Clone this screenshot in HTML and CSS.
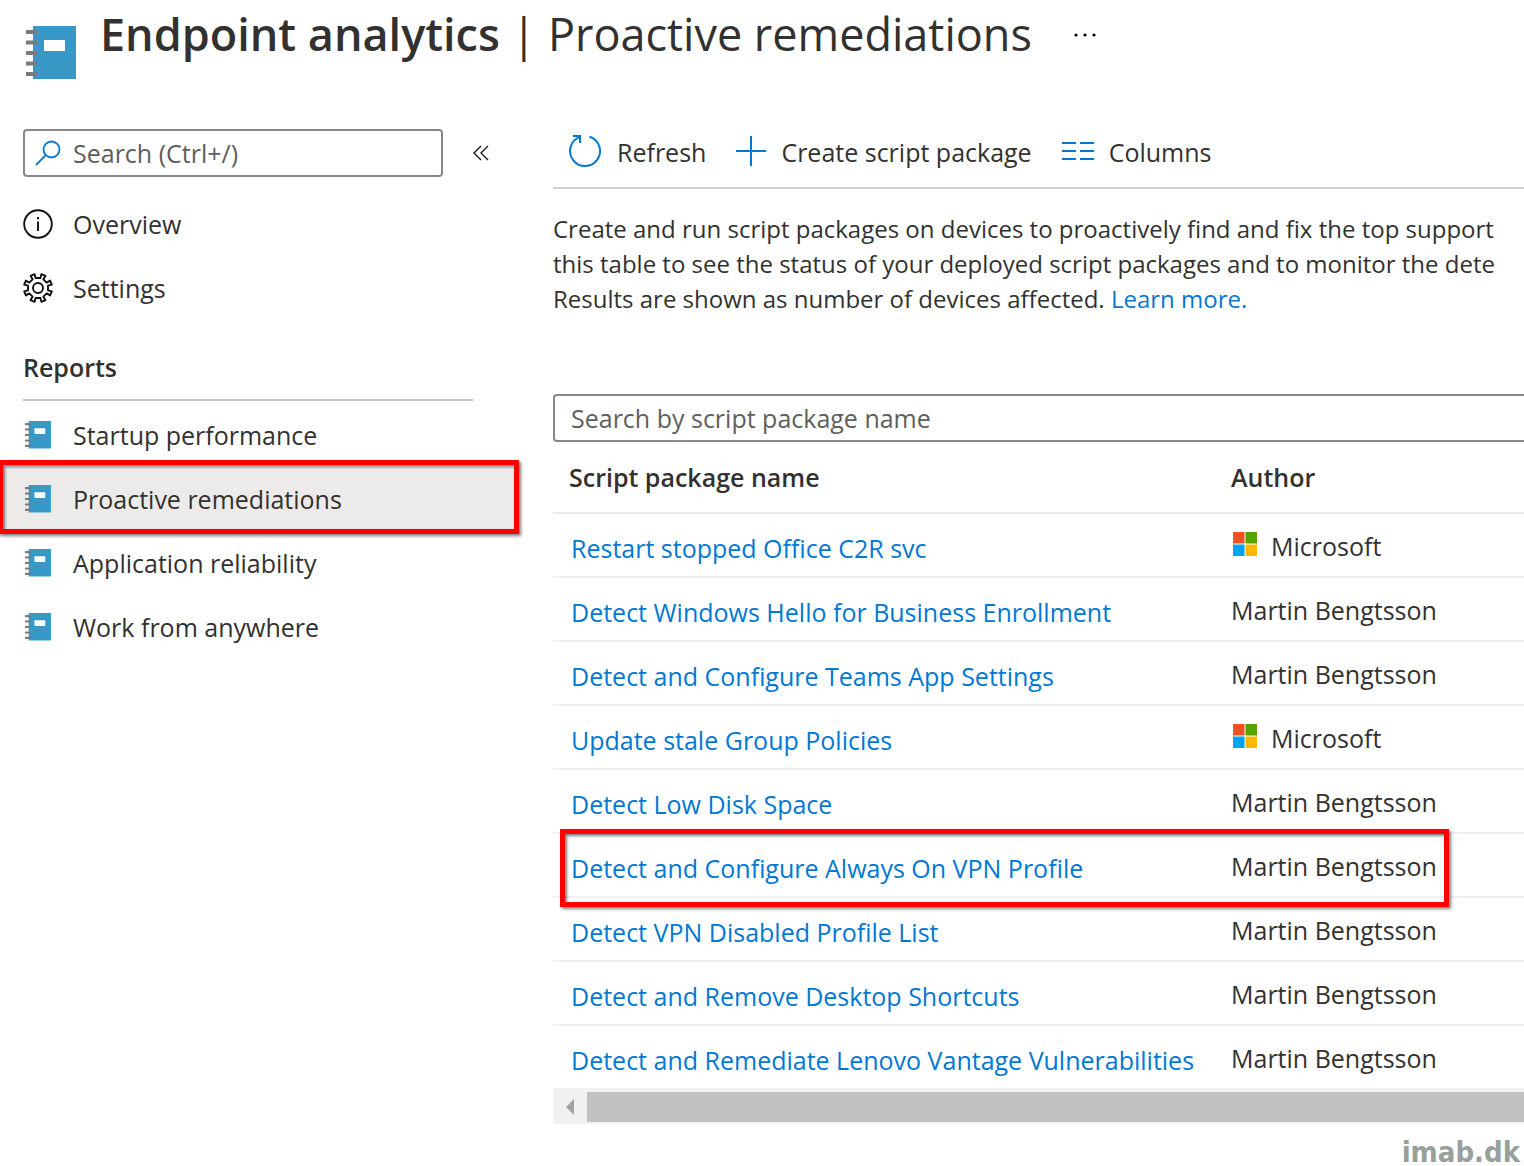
FILE: index.html
```
<!DOCTYPE html>
<html lang="en">
<head>
  <meta charset="UTF-8" />
  <meta name="viewport" content="width=device-width, initial-scale=1.0" />
  <title>Endpoint analytics | Proactive remediations</title>
  <link rel="stylesheet" href="styles.css">
</head>
<body>
  <svg class="sprite" aria-hidden="true">
    <symbol id="notebook" viewBox="0 0 50 54">
      <path fill="#3999c6" d="M7 0h43v53H7z"/>
      <path fill="#fff" d="M18 14h21v11H18z"/>
      <path fill="#7a7a7a" d="M0 4h11v4H0zM0 14.500h11v4H0zM0 25h11v4H0zM0 35.500h11v4H0zM0 46h11v4H0z"/>
    </symbol>
    <symbol id="windows" viewBox="0 0 24 24">
      <path fill="#f25022" d="M0 0h11.500v11.500H0z"/>
      <path fill="#57a300" d="M12.500 0H24v11.500H12.500z"/>
      <path fill="#00a4ef" d="M0 12.500h11.500V24H0z"/>
      <path fill="#ffb900" d="M12.500 12.500H24V24H12.500z"/>
    </symbol>
  </svg>

  <header class="page-header">
    <svg class="header-icon"><use href="#notebook"/></svg>
    <h1><strong>Endpoint analytics</strong> | Proactive remediations</h1>
    <button class="more" aria-label="More">
      <svg width="24" height="4" viewBox="0 0 24 4"><circle cx="3" cy="2" r="1.600"/><circle cx="12" cy="2" r="1.600"/><circle cx="21" cy="2" r="1.600"/></svg>
    </button>
  </header>

  <div class="layout">
    <nav class="sidebar">
      <div class="search-row">
        <label class="menu-search">
          <svg width="26" height="26" viewBox="0 0 26 26" fill="none" stroke="#0078d4" stroke-width="1.800"><circle cx="16.500" cy="9.500" r="8"/><path d="M10.800 15.200L1 25"/></svg>
          <input type="text" placeholder="Search (Ctrl+/)" aria-label="Search menu">
        </label>
        <button class="collapse" aria-label="Collapse menu">
          <svg width="16" height="16" viewBox="0 0 16 16" fill="none" stroke="#111" stroke-width="1.300"><path d="M8 1L1 8l7 7M15 1L8 8l7 7"/></svg>
        </button>
      </div>

      <ul class="menu">
        <li><a href="#">
          <svg class="menu-icon" viewBox="0 0 30 30" fill="none" stroke="#111" stroke-width="1.900"><circle cx="15" cy="15" r="13.800"/><path d="M15 12.500v9.500M15 8v2.200"/></svg>
          Overview</a></li>
        <li><a href="#">
          <svg class="menu-icon" viewBox="0 0 30 30" fill="none" stroke="#111" stroke-width="1.900" stroke-linejoin="round"><circle cx="15" cy="15" r="5"/><path d="M12.600 5L11.600 1.200L7.600 2.900L9.600 6.300L6.300 9.600L2.900 7.600L1.200 11.600L5 12.600L5 17.400L1.200 18.400L2.900 22.400L6.300 20.400L9.600 23.700L7.600 27.100L11.600 28.800L12.600 25L17.400 25L18.400 28.800L22.400 27.100L20.400 23.700L23.700 20.400L27.100 22.400L28.800 18.400L25 17.400L25 12.600L28.800 11.600L27.100 7.600L23.700 9.600L20.400 6.300L22.400 2.900L18.400 1.200L17.400 5Z"/></svg>
          Settings</a></li>
      </ul>

      <h2>Reports</h2>
      <ul class="menu">
        <li><a href="#"><svg class="menu-icon book"><use href="#notebook"/></svg>Startup performance</a></li>
        <li class="selected"><a href="#"><svg class="menu-icon book"><use href="#notebook"/></svg>Proactive remediations</a></li>
        <li><a href="#"><svg class="menu-icon book"><use href="#notebook"/></svg>Application reliability</a></li>
        <li><a href="#"><svg class="menu-icon book"><use href="#notebook"/></svg>Work from anywhere</a></li>
      </ul>
    </nav>

    <main class="content">
      <div class="toolbar">
        <button>
          <svg width="34" height="34" viewBox="0 0 34 34" fill="none" stroke="#0078d4" stroke-width="2"><path d="M21.500 2.700A15 15 0 1 1 12 2.900M5 2h7v7"/></svg>
          Refresh
        </button>
        <button>
          <svg width="30" height="30" viewBox="0 0 30 30" fill="none" stroke="#0078d4" stroke-width="2"><path d="M15 0v30M0 15h30"/></svg>
          Create script package
        </button>
        <button>
          <svg width="32" height="18" viewBox="0 0 32 18" fill="none" stroke="#0078d4" stroke-width="2"><path d="M0 1h14M18 1h14M0 9h14M18 9h14M0 17h14M18 17h14"/></svg>
          Columns
        </button>
      </div>

      <p class="intro">
        Create and run script packages on devices to proactively find and fix the top support<br>
        this table to see the status of your deployed script packages and to monitor the dete<br>
        Results are shown as number of devices affected. <a href="#">Learn more.</a>
      </p>

      <input class="table-search" type="text" placeholder="Search by script package name" aria-label="Search by script package name">

      <table>
        <thead>
          <tr><th class="name">Script package name</th><th>Author</th></tr>
        </thead>
        <tbody>
          <tr><td><a href="#">Restart stopped Office C2R svc</a></td><td><svg class="ms"><use href="#windows"/></svg>Microsoft</td></tr>
          <tr><td><a href="#">Detect Windows Hello for Business Enrollment</a></td><td>Martin Bengtsson</td></tr>
          <tr><td><a href="#">Detect and Configure Teams App Settings</a></td><td>Martin Bengtsson</td></tr>
          <tr><td><a href="#">Update stale Group Policies</a></td><td><svg class="ms"><use href="#windows"/></svg>Microsoft</td></tr>
          <tr><td><a href="#">Detect Low Disk Space</a></td><td>Martin Bengtsson</td></tr>
          <tr><td class="marked"><a href="#">Detect and Configure Always On VPN Profile</a></td><td>Martin Bengtsson</td></tr>
          <tr><td><a href="#">Detect VPN Disabled Profile List</a></td><td>Martin Bengtsson</td></tr>
          <tr><td><a href="#">Detect and Remove Desktop Shortcuts</a></td><td>Martin Bengtsson</td></tr>
          <tr><td><a href="#">Detect and Remediate Lenovo Vantage Vulnerabilities</a></td><td>Martin Bengtsson</td></tr>
        </tbody>
      </table>

      <div class="scrollbar">
        <button aria-label="Scroll left"><svg width="8" height="16" viewBox="0 0 8 16"><path fill="#a3a3a3" d="M8 0v16L0 8z"/></svg></button>
        <div class="thumb"></div>
      </div>
    </main>
  </div>

  <footer>imab.dk</footer>
</body>
</html>
```

FILE: styles.css
```
*,
*::after {
  box-sizing: border-box;
}
body {
  margin: 0;
  font-family: "Open Sans", "Noto Sans", sans-serif;
  font-size: 25px;
  line-height: 35px;
  color: #323130;
  background: #fff;
  overflow: hidden;
}
.sprite {
  display: none;
}
svg {
  flex: none;
}
a {
  color: #0078d4;
  text-decoration: none;
}
button {
  display: flex;
  align-items: center;
  padding: 0;
  border: none;
  background: none;
  font: inherit;
  color: inherit;
  cursor: pointer;
}
input {
  font: inherit;
  color: inherit;
}
input::placeholder {
  color: #605e5c;
  opacity: 1;
}

/* header */
.page-header {
  display: flex;
  align-items: flex-start;
  height: 129px;
  padding-left: 26px;
}
.header-icon {
  width: 50px;
  height: 54px;
  margin-top: 26px;
}
h1 {
  margin: 0 0 0 24px;
  font-size: 45px;
  line-height: 68px;
  font-weight: 400;
  white-space: nowrap;
}
h1 strong {
  font-weight: 600;
}
.more {
  height: 70px;
  margin-left: 41px;
}

/* sidebar */
.layout {
  display: flex;
  align-items: flex-start;
}
.sidebar {
  flex: none;
  width: 519px;
  margin-right: 34px;
}
.search-row {
  display: flex;
  gap: 30px;
  padding-left: 23px;
  margin-bottom: 15px;
}
.menu-search {
  display: flex;
  align-items: center;
  gap: 12px;
  width: 420px;
  height: 48px;
  padding-left: 10px;
  border: 2px solid #8a8886;
  border-radius: 4px;
}
.menu-search input {
  flex: 1;
  min-width: 0;
  padding: 0;
  border: none;
  outline: none;
}
.menu {
  margin: 0;
  padding: 0;
  list-style: none;
}
.menu a {
  display: flex;
  align-items: center;
  gap: 20px;
  height: 64px;
  padding-left: 23px;
  color: inherit;
}
.menu-icon {
  width: 30px;
  height: 30px;
}
.book {
  height: 28px;
}
h2 {
  margin: 30px 46px 2px 23px;
  padding-bottom: 14px;
  border-bottom: 2px solid #c8c6c4;
  font-size: 25px;
  line-height: 35px;
  font-weight: 600;
}
.selected {
  position: relative;
  background: #edebe9;
}
.selected::after,
.marked::after {
  content: '';
  position: absolute;
  border: 5px solid #f00;
  box-shadow: 2px 2px 3px rgba(0, 0, 0, 0.5), inset 2px 2px 3px rgba(0, 0, 0, 0.5);
  pointer-events: none;
}
.selected::after {
  top: -7px;
  right: 0;
  bottom: -3px;
  left: -2px;
}

/* content */
.content {
  flex: 1;
  min-width: 0;
}
.toolbar {
  display: flex;
  gap: 30px;
  height: 60px;
  padding: 0 0 12px 15px;
  border-bottom: 2px solid #d2d0ce;
}
.toolbar button {
  gap: 15px;
  white-space: nowrap;
}
.toolbar svg {
  margin-bottom: 2px;
}
.intro {
  margin: 22px 0 78px;
  font-size: 24px;
  white-space: nowrap;
}
.table-search {
  display: block;
  width: calc(100% + 4px);
  height: 48px;
  padding: 0 16px;
  border: 2px solid #8a8886;
  border-radius: 4px;
}
table {
  width: 100%;
  border-collapse: separate;
  border-spacing: 0;
  table-layout: fixed;
}
th,
td {
  height: 64px;
  padding: 0;
  border-bottom: 2px solid #f0f0f0;
  text-align: left;
  white-space: nowrap;
}
th {
  height: 72px;
  border-color: #eaeaea;
  font-weight: 600;
}
td {
  padding-top: 2px;
}
.name {
  width: 678px;
  padding-left: 16px;
}
td:first-child {
  padding: 6px 0 0 18px;
}
tbody tr:last-child td {
  height: 62px;
  border-bottom: none;
}
.ms {
  width: 24px;
  height: 24px;
  margin: 0 14px 0 2px;
}
.marked {
  position: relative;
}
.marked::after {
  top: -5px;
  left: 7px;
  width: 889px;
  height: 78px;
}
.scrollbar {
  display: flex;
  height: 36px;
  padding: 4px 0 2px;
  background: #f1f1f1;
}
.scrollbar button {
  width: 34px;
  justify-content: center;
}
.thumb {
  flex: 1;
  background: #c1c1c1;
}
footer {
  padding: 14px 4px 0 0;
  text-align: right;
  font-family: "DejaVu Sans Condensed", "DejaVu Sans", sans-serif;
  font-size: 29px;
  line-height: 28px;
  font-weight: 700;
  color: #98a09c;
}
```
